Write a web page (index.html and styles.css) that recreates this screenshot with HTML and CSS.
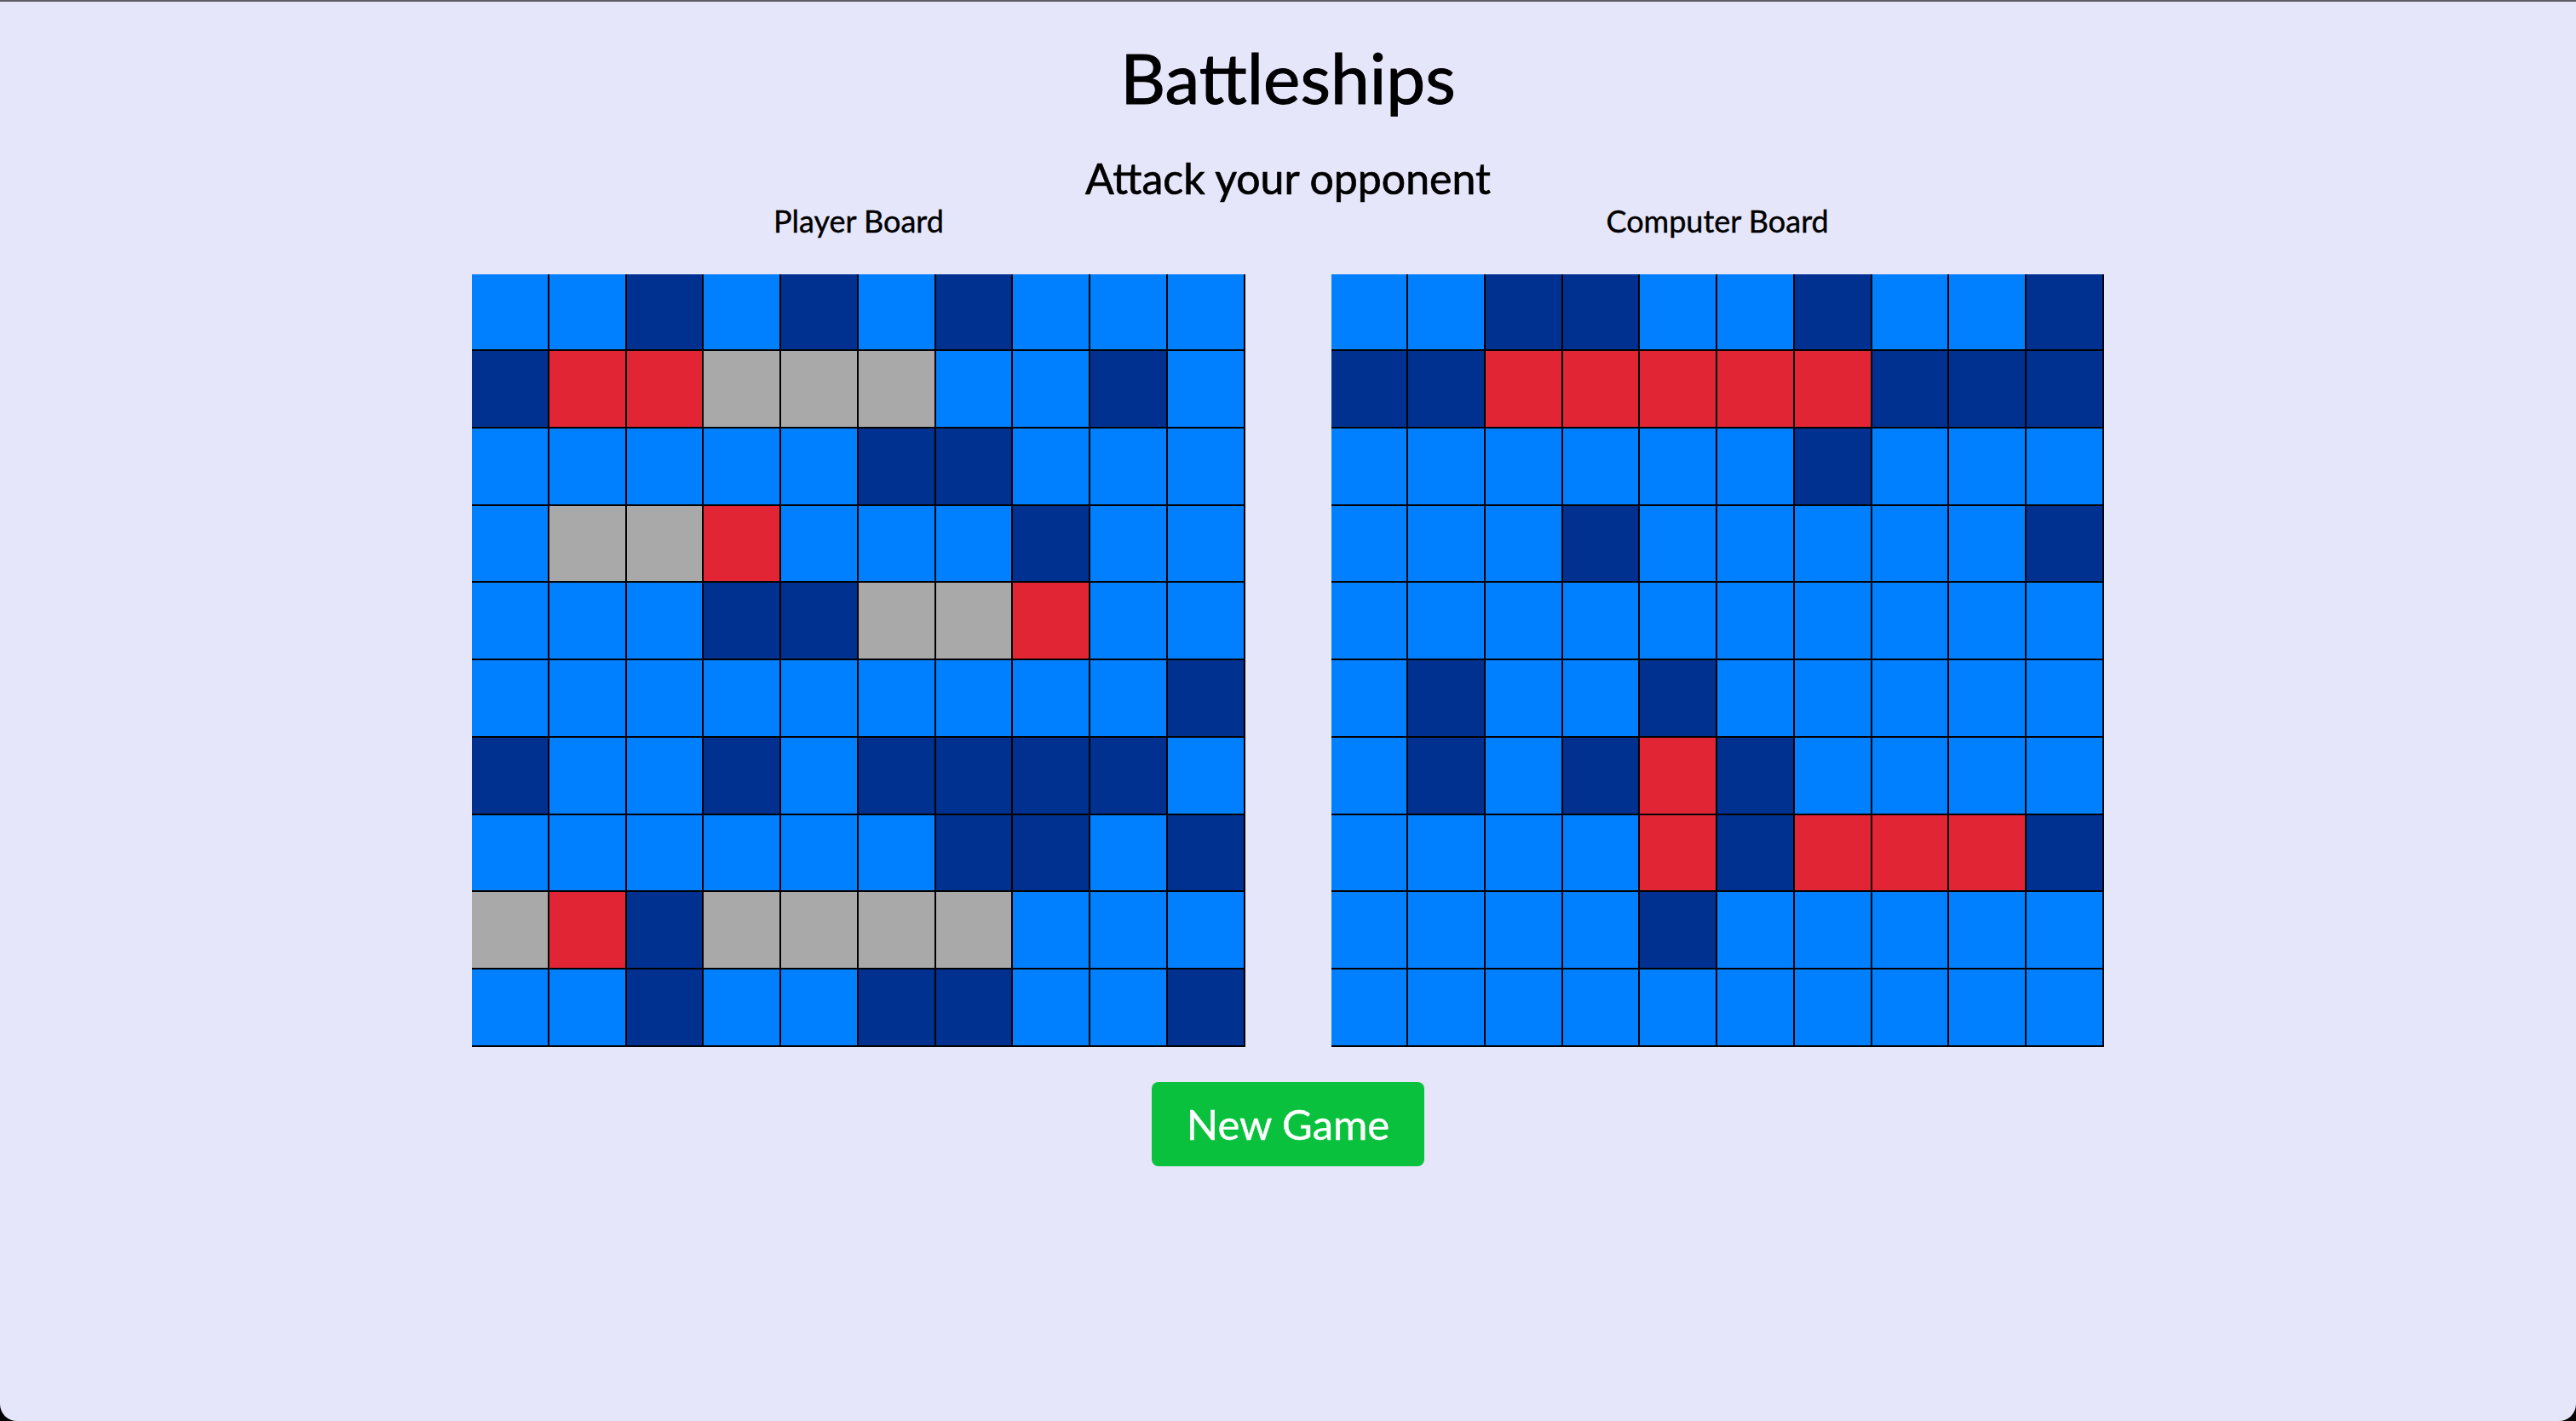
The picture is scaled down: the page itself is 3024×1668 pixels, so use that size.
FILE: index.html
```html
<!doctype html>
<html lang="en">
<head>
    <meta charset="UTF-8">
    <meta name="viewport" content="width=device-width, initial-scale=1.0">
    <title>Battleships</title>
    <link rel="stylesheet" href="styles.css">
</head>
<body>
    <div class="container">
        <h1>Battleships</h1>
        <h2 id="status">Attack your opponent</h2>
        <div class="boards">
            <div class="board-wrapper">
                <div class="board-title">Player Board</div>
                <div class="board" id="playerBoard"></div>
            </div>
            <div class="board-wrapper">
                <div class="board-title">Computer Board</div>
                <div class="board" id="computerBoard"></div>
            </div>
        </div>
        <button class="new-game" onclick="newGame()">New Game</button>
    </div>

    <script>
        // w = water, s = ship, h = hit, m = miss
        const playerGrid = [
            'wwswswswww',
            'shhmmmwwsw',
            'wwwwwsswww',
            'wmmhwwwsww',
            'wwwssmmhww',
            'wwwwwwwwws',
            'swwswssssw',
            'wwwwwwssws',
            'mhsmmmmwww',
            'wwswwsswws'
        ];
        const computerGrid = [
            'wwsswwswws',
            'sshhhhhsss',
            'wwwwwwswww',
            'wwwswwwwws',
            'wwwwwwwwww',
            'wswwswwwww',
            'wswshswwww',
            'wwwwhshhhs',
            'wwwwswwwww',
            'wwwwwwwwww'
        ];
        const types = { w: 'water', s: 'ship', h: 'hit', m: 'miss' };

        function drawBoard(id, grid) {
            const board = document.getElementById(id);
            board.innerHTML = '';
            grid.forEach(row => {
                row.split('').forEach(c => {
                    const cell = document.createElement('div');
                    cell.className = 'cell ' + types[c];
                    board.appendChild(cell);
                });
            });
        }

        function newGame() {
            drawBoard('playerBoard', playerGrid);
            drawBoard('computerBoard', computerGrid);
        }

        newGame();
    </script>
</body>
</html>
```

FILE: styles.css
```css
html {
    background-color: #000;
}
body {
    font-family: Lato, "Noto Sans", sans-serif;
    background-color: #e6e6fa;
    margin: 0;
    min-height: calc(100vh - 2px);
    border-top: 2px solid #5c5c62;
    border-radius: 0 0 20px 20px;
}
.container {
    display: flex;
    flex-direction: column;
    align-items: center;
}
h1 {
    font-size: 82px;
    font-weight: normal;
    line-height: 1.2;
    margin: 39px 0 0;
    -webkit-text-stroke: 1px #000;
}
h2 {
    font-size: 50px;
    font-weight: normal;
    line-height: 1.2;
    margin: 40px 0 0;
    -webkit-text-stroke: 0.7px #000;
}
.boards {
    display: flex;
    justify-content: center;
    gap: 101px;
}
.board-wrapper {
    display: flex;
    flex-direction: column;
    align-items: center;
}
.board-title {
    font-size: 36px;
    line-height: 1.2;
    margin-top: -1px;
    margin-bottom: 40px;
    -webkit-text-stroke: 0.4px #000;
}
.board {
    display: grid;
    grid-template-columns: repeat(10, 1fr);
    width: 30vw;
}
.cell {
    aspect-ratio: 1;
    box-sizing: border-box;
    border-right: 2px solid #000;
    border-bottom: 2px solid #000;
}
.water {
    background-color: #0080ff;
}
.ship {
    background-color: #003090;
}
.hit {
    background-color: #e22535;
}
.miss {
    background-color: #a9a9a9;
}
.new-game {
    margin-top: 41px;
    padding: 20px 41px;
    font-family: inherit;
    font-size: 49px;
    line-height: 1.2;
    color: #fff;
    background-color: #0ac13e;
    border: none;
    border-radius: 8px;
    cursor: pointer;
    -webkit-text-stroke: 0.4px #fff;
}
```
